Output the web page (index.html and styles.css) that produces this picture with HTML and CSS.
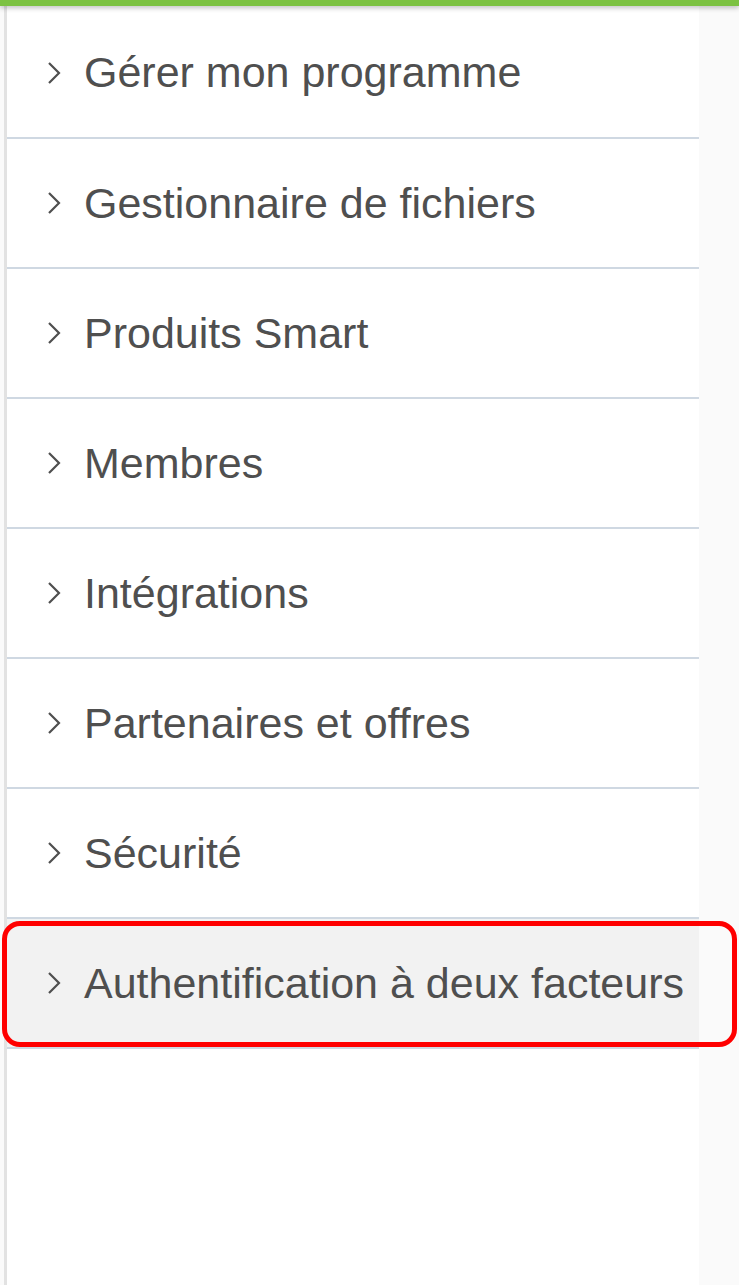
FILE: index.html
```html
<!DOCTYPE html>
<html lang="fr">
<head>
    <meta charset="UTF-8">
    <meta name="viewport" content="width=device-width, initial-scale=1.0">
    <title>Menu</title>
    <link rel="stylesheet" href="styles.css">
</head>
<body>
    <div class="topbar"></div>
    <div class="page">
        <nav class="sidebar">
            <ul class="menu">
                <li class="item"><svg class="chev" viewBox="0 0 14 24"><polyline points="2,2 12,12 2,22"/></svg><span>Gérer mon programme</span></li>
                <li class="item"><svg class="chev" viewBox="0 0 14 24"><polyline points="2,2 12,12 2,22"/></svg><span>Gestionnaire de fichiers</span></li>
                <li class="item"><svg class="chev" viewBox="0 0 14 24"><polyline points="2,2 12,12 2,22"/></svg><span>Produits Smart</span></li>
                <li class="item"><svg class="chev" viewBox="0 0 14 24"><polyline points="2,2 12,12 2,22"/></svg><span>Membres</span></li>
                <li class="item"><svg class="chev" viewBox="0 0 14 24"><polyline points="2,2 12,12 2,22"/></svg><span>Intégrations</span></li>
                <li class="item"><svg class="chev" viewBox="0 0 14 24"><polyline points="2,2 12,12 2,22"/></svg><span>Partenaires et offres</span></li>
                <li class="item"><svg class="chev" viewBox="0 0 14 24"><polyline points="2,2 12,12 2,22"/></svg><span>Sécurité</span></li>
                <li class="item active"><svg class="chev" viewBox="0 0 14 24"><polyline points="2,2 12,12 2,22"/></svg><span>Authentification à deux facteurs</span></li>
            </ul>
        </nav>
        <div class="highlight"></div>
    </div>
</body>
</html>
```

FILE: styles.css
```css
/* Base */
* {
    margin: 0;
    padding: 0;
    box-sizing: border-box;
}

body {
    background: #fafafa;
    font-family: 'Liberation Sans', Arial, sans-serif;
    color: #4f4f4f;
    height: 1285px;
    overflow: hidden;
}

/* Barre verte du haut */
.topbar {
    height: 6px;
    background: #7cc242;
    box-shadow: 0 2px 5px rgba(0, 0, 0, 0.25);
    position: relative;
    z-index: 2;
}

.page {
    position: relative;
    height: 1279px;
}

/* Panneau du menu */
.sidebar {
    width: 695px;
    height: 100%;
    margin-left: 4px;
    background: #fff;
    border-left: 3px solid #e2e2e2;
}

.menu {
    list-style: none;
}

.item {
    height: 130px;
    display: flex;
    align-items: center;
    padding-left: 40px;
    border-bottom: 2px solid #cfd8e2;
    font-size: 43px;
    white-space: nowrap;
}

.item:first-child {
    height: 133px;
    padding-top: 2px;
}

.item.active {
    background: #f2f2f2;
}

.chev {
    width: 14px;
    height: 24px;
    margin-right: 23px;
    flex-shrink: 0;
}

.chev polyline {
    fill: none;
    stroke: #4f4f4f;
    stroke-width: 2.2;
}

/* Cadre rouge d'annotation */
.highlight {
    position: absolute;
    left: 2px;
    top: 915px;
    width: 735px;
    height: 126px;
    border: 5px solid #ff0000;
    border-radius: 18px;
}
```
